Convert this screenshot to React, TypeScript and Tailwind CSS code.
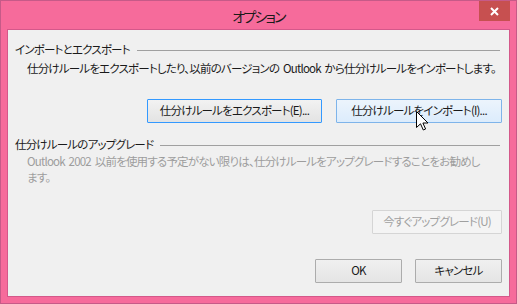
import React from "react";

// ─── Shared styles ───────────────────────────────────────────────────────────
const font =
  "font-['Meiryo_UI','Noto_Sans_CJK_JP','Noto_Sans',sans-serif] [font-feature-settings:'palt']";

// Meiryo UI is narrow; squeeze Noto a little to match its width
const txt = "text-[11.5px] tracking-[-0.8px] [word-spacing:2px]";

const btnBase = `h-[24px] flex items-center justify-center ${txt} border rounded-[1px]`;

// ─── Section heading with trailing rule ──────────────────────────────────────
const GroupHeading = ({ label }: { label: string }) => (
  <div className="flex items-center h-[16px] pl-[7px] pr-[9px]">
    <span className={`${txt} text-[#1a1a1a] whitespace-nowrap`}>{label}</span>
    <div className="flex-1 h-px bg-[#a0a0a0] ml-[7px]" />
  </div>
);

// ─── Mouse pointer over the hovered button ───────────────────────────────────
const Pointer = () => (
  <svg
    className="absolute left-[415px] top-[110px]"
    width="13"
    height="20"
    viewBox="0 0 13 20"
  >
    <path
      d="M0.5 0.5 L0.5 16.5 L4.5 12.8 L7.3 19 L9.6 18 L6.9 12 L12 12 Z"
      fill="#fff"
      stroke="#000"
      strokeWidth="1"
      strokeLinejoin="miter"
    />
  </svg>
);

// ─── Dialog ──────────────────────────────────────────────────────────────────
export default function App() {
  return (
    <div
      className={`relative w-[517px] h-[304px] bg-[#f66b9b] border border-[#c65a88] flex flex-col ${font}`}
    >
      {/* Title bar */}
      <div className="relative h-[28px] flex items-center justify-center">
        <span className="text-[14px] tracking-[-1.8px] text-[#1a1a1a] leading-none mt-[2px]">
          オプション
        </span>
        <div className="absolute right-[6px] top-0 w-[31px] h-[20px] bg-[#c75050] flex items-center justify-center">
          <svg width="9" height="9" viewBox="0 0 9 9">
            <path d="M1 1 L8 8 M8 1 L1 8" stroke="#fff" strokeWidth="2" />
          </svg>
        </div>
      </div>

      {/* Client area */}
      <div className="mx-[6px] mb-[6px] flex-1 border border-[#d4588a] bg-[#f0f0f0] flex flex-col">
        <div className="mt-[12px]">
          <GroupHeading label="インポートとエクスポート" />
        </div>
        <p
          className={`mt-[2px] h-[16px] leading-[16px] pl-[19px] ${txt} text-[#1a1a1a] whitespace-nowrap`}
        >
          仕分けルールをエクスポートしたり、以前のバージョンの Outlook から仕分けルールをインポートします。
        </p>

        <div className="mt-[23px] flex justify-end gap-[14px] pr-[7px]">
          <button
            className={`${btnBase} w-[175px] border-[#3399ff] bg-gradient-to-b from-[#f2f2f2] to-[#e3e3e3] text-[#1a1a1a]`}
          >
            仕分けルールをエクスポート(E)...
          </button>
          <button
            className={`${btnBase} w-[166px] border-[#7eb4ea] bg-gradient-to-b from-[#ecf4fc] to-[#dcecfc] text-[#1a1a1a]`}
          >
            仕分けルールをインポート(I)...
          </button>
        </div>

        <div className="mt-[14px]">
          <GroupHeading label="仕分けルールのアップグレード" />
        </div>
        <p className={`pl-[19px] w-[495px] ${txt} leading-[16px] text-[#9d9d9d]`}>
          Outlook 2002 以前を使用する予定がない限りは、仕分けルールをアップグレードすることをお勧めし
          <br />
          ます。
        </p>

        <div className="mt-[25px] flex justify-end pr-[7px]">
          <button
            disabled
            className={`${btnBase} w-[130px] border-[#d5d5d5] bg-[#f4f4f4] text-[#a0a0a0]`}
          >
            今すぐアップグレード(U)
          </button>
        </div>

        <div className="mt-[25px] flex justify-end gap-[13px] pr-[7px]">
          <button
            className={`${btnBase} w-[87px] border-[#acacac] bg-gradient-to-b from-[#f0f0f0] to-[#e5e5e5] text-[#1a1a1a]`}
          >
            OK
          </button>
          <button
            className={`${btnBase} w-[87px] border-[#acacac] bg-gradient-to-b from-[#f0f0f0] to-[#e5e5e5] text-[#1a1a1a]`}
          >
            キャンセル
          </button>
        </div>
      </div>

      <Pointer />
    </div>
  );
}
